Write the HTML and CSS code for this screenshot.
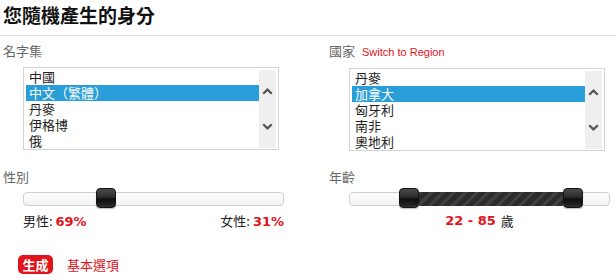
FILE: index.html
```html
<!DOCTYPE html>
<html lang="zh-Hant">
<head>
<meta charset="utf-8">
<title>您隨機產生的身分</title>
<link rel="stylesheet" href="styles.css">
</head>
<body>
<div class="page">
  <h1 class="title">您隨機產生的身分</h1>
  <div class="grid">
    <section class="field">
      <div class="label">名字集</div>
      <div class="listbox">
        <ul class="options">
          <li>中國</li>
          <li class="selected">中文（繁體）</li>
          <li>丹麥</li>
          <li>伊格博</li>
          <li>俄</li>
        </ul>
        <div class="scrollbar">
          <svg class="chev" width="11" height="7" viewBox="0 0 11 7"><path d="M1.2 5.8 L5.5 1.6 L9.8 5.8" fill="none" stroke="#555" stroke-width="2.2"/></svg>
          <svg class="chev" width="11" height="7" viewBox="0 0 11 7"><path d="M1.2 1.2 L5.5 5.4 L9.8 1.2" fill="none" stroke="#555" stroke-width="2.2"/></svg>
        </div>
      </div>
    </section>
    <section class="field">
      <div class="label">國家<a class="switch" href="#">Switch to Region</a></div>
      <div class="listbox">
        <ul class="options">
          <li>丹麥</li>
          <li class="selected">加拿大</li>
          <li>匈牙利</li>
          <li>南非</li>
          <li>奧地利</li>
        </ul>
        <div class="scrollbar">
          <svg class="chev" width="11" height="7" viewBox="0 0 11 7"><path d="M1.2 5.8 L5.5 1.6 L9.8 5.8" fill="none" stroke="#555" stroke-width="2.2"/></svg>
          <svg class="chev" width="11" height="7" viewBox="0 0 11 7"><path d="M1.2 1.2 L5.5 5.4 L9.8 1.2" fill="none" stroke="#555" stroke-width="2.2"/></svg>
        </div>
      </div>
    </section>
    <section class="field slider-field">
      <div class="label">性別</div>
      <div class="track">
        <span class="handle" style="left:72px"></span>
      </div>
      <div class="values split">
        <span>男性: <b class="num">69%</b></span>
        <span>女性: <b class="num">31%</b></span>
      </div>
    </section>
    <section class="field slider-field">
      <div class="label">年齡</div>
      <div class="track">
        <span class="range" style="left:69px;width:144px"></span>
        <span class="handle" style="left:49px"></span>
        <span class="handle" style="left:213px"></span>
      </div>
      <div class="values center">
        <b class="num">22 - 85</b> 歲
      </div>
    </section>
  </div>
  <div class="actions">
    <button class="btn" type="button">生成</button>
    <a class="link" href="#">基本選項</a>
  </div>
</div>
</body>
</html>
```
FILE: styles.css
```css
* { box-sizing: border-box; }
html, body { margin: 0; padding: 0; background: #fff; }
body {
  font-family: "Noto Sans CJK TC", "Noto Sans", sans-serif;
  font-size: 13px;
  color: #222;
  width: 616px;
  height: 280px;
  overflow: hidden;
}
.page { padding: 0; }
.title {
  margin: 0;
  padding: 3px 3px 8px;
  font-size: 19px;
  line-height: 24px;
  font-weight: bold;
  color: #111;
  border-bottom: 1px solid #e0e0e0;
}
.grid {
  display: grid;
  grid-template-columns: 326px 1fr;
  padding-left: 3px;
  row-gap: 18px;
  margin-top: 7px;
}
.label {
  line-height: 16px;
  color: #666;
  display: flex;
  align-items: baseline;
}
.switch {
  font-family: "Liberation Sans", Arial, sans-serif;
  font-size: 11px;
  color: #e3131b;
  text-decoration: none;
  margin-left: 7px;
}
.listbox {
  margin: 8px 0 0 20px;
  width: 256px;
  height: 83px;
  border: 1px solid #d4d4d4;
  padding: 1px 2px;
  display: flex;
}
.options {
  list-style: none;
  margin: 0;
  padding: 0;
  flex: 1;
  overflow: hidden;
}
.options li {
  line-height: 16px;
  height: 16px;
  padding-left: 3px;
  white-space: nowrap;
  color: #222;
}
.options li.selected {
  background: #2a9ed8;
  color: #fff;
}
.scrollbar {
  width: 17px;
  margin-top: 1px;
  background: #efefef;
  display: flex;
  flex-direction: column;
  justify-content: space-between;
  align-items: center;
  padding: 18px 0;
}
.chev { display: block; }
.track {
  position: relative;
  margin: 7px 0 0 20px;
  width: 261px;
  height: 14px;
  border: 1px solid #cfcfcf;
  border-radius: 4px;
  background: linear-gradient(#fdfdfd, #f2f2f2);
}
.handle {
  position: absolute;
  top: -5px;
  width: 20px;
  height: 20px;
  border: 1px solid #151515;
  border-radius: 4px;
  background: linear-gradient(#4a4a4a 0%, #2c2c2c 45%, #0e0e0e 55%, #1e1e1e 85%, #333 100%);
  box-shadow: 0 1px 1px rgba(0,0,0,0.25);
}
.range {
  position: absolute;
  top: -1px;
  height: 14px;
  background-color: #2e2e2e;
  background-image: repeating-linear-gradient(-45deg, #2c2c2c 0 5px, #404040 5px 8px);
}
.values {
  margin: 7px 0 0 20px;
  width: 261px;
  line-height: 16px;
  color: #222;
  display: flex;
}
.values.split { justify-content: space-between; }
.values.center { justify-content: center; gap: 5px; }
.num {
  font-family: "DejaVu Sans", Verdana, sans-serif;
  font-weight: bold;
  font-size: 13px;
  color: #e3131b;
}
.actions {
  display: flex;
  align-items: center;
  margin: 25px 0 0 18px;
}
.btn {
  font-family: "Noto Sans CJK TC", sans-serif;
  font-size: 13px;
  font-weight: bold;
  color: #fff;
  background: #e3131b;
  border: none;
  border-radius: 5px;
  height: 19px;
  width: 35px;
  padding: 0;
  line-height: 19px;
}
.link {
  margin-left: 14px;
  color: #e3131b;
  text-decoration: none;
  font-size: 13px;
}
```
